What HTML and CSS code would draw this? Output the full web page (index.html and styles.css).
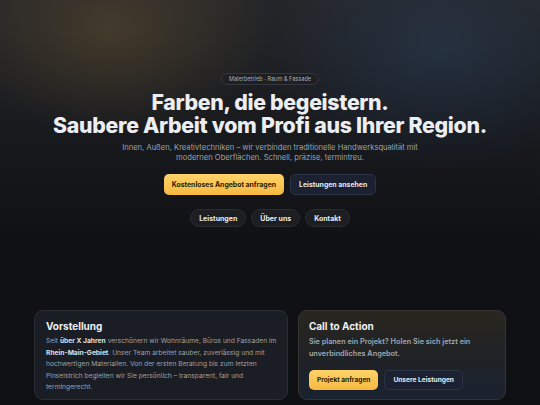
FILE: index.html
```html
<!DOCTYPE html>
<html lang="de">
<head>
<meta charset="utf-8">
<title>Malerbetrieb</title>
<link rel="stylesheet" href="styles.css">
</head>
<body>
<div class="page">
  <header class="hero">
    <span class="badge">Malerbetrieb · Raum &amp; Fassade</span>
    <h1 class="title">Farben, die begeistern.<br>Saubere Arbeit vom Profi aus Ihrer Region.</h1>
    <p class="lead">Innen, Außen, Kreativtechniken – wir verbinden traditionelle Handwerksqualität mit modernen Oberflächen. Schnell, präzise, termintreu.</p>
    <div class="actions">
      <a class="btn btn-primary" href="#">Kostenloses Angebot anfragen</a>
      <a class="btn btn-dark" href="#">Leistungen ansehen</a>
    </div>
    <nav class="nav">
      <a class="pill" href="#">Leistungen</a>
      <a class="pill" href="#">Über uns</a>
      <a class="pill" href="#">Kontakt</a>
    </nav>
  </header>
  <main class="cards">
    <section class="card card-intro">
      <h2 class="card-title">Vorstellung</h2>
      <p class="card-text">Seit <strong>über X Jahren</strong> verschönern wir Wohnräume, Büros und Fassaden im <strong>Rhein-Main-Gebiet</strong>. Unser Team arbeitet sauber, zuverlässig und mit hochwertigen Materialien. Von der ersten Beratung bis zum letzten Pinselstrich begleiten wir Sie persönlich – transparent, fair und termingerecht.</p>
    </section>
    <section class="card card-cta">
      <h2 class="card-title">Call to Action</h2>
      <p class="cta-text">Sie planen ein Projekt? Holen Sie sich jetzt ein unverbindliches Angebot.</p>
      <div class="cta-actions">
        <a class="btn btn-primary btn-sm" href="#">Projekt anfragen</a>
        <a class="btn btn-dark btn-sm" href="#">Unsere Leistungen</a>
      </div>
    </section>
  </main>
</div>
</body>
</html>
```

FILE: styles.css
```css
* { box-sizing: border-box; }
html, body { margin: 0; padding: 0; }
body {
  font-family: Inter, "Liberation Sans", sans-serif;
  color: #e9ebef;
  background: #0e1014;
  min-height: 405px;
}
.page {
  min-height: 405px;
  background:
    radial-gradient(ellipse 230px 150px at 110px 30px, rgba(120, 95, 50, 0.38), transparent 70%),
    radial-gradient(ellipse 240px 170px at 440px 50px, rgba(45, 75, 115, 0.35), transparent 70%),
    linear-gradient(180deg, #252629 0%, #17191d 35%, #0f1115 60%, #0e1014 100%);
  padding: 73px 34px 6px;
}
.hero {
  display: flex;
  flex-direction: column;
  align-items: center;
  text-align: center;
}
.badge {
  font-size: 5.6px;
  color: #a9adb5;
  border: 1px solid #34373d;
  background: rgba(30, 32, 36, 0.7);
  border-radius: 999px;
  padding: 2px 7px;
  line-height: 6px;
}
.title {
  margin: 6px 0 0;
  font-size: 21.3px;
  line-height: 23px;
  font-weight: 800;
  letter-spacing: -0.3px;
  color: #eceef2;
}
.lead {
  margin: 6px 0 0;
  max-width: 310px;
  font-size: 7.6px;
  line-height: 10px;
  color: #9ca2ad;
}
.actions {
  display: flex;
  gap: 6px;
  margin-top: 11px;
}
.btn {
  display: inline-flex;
  align-items: center;
  justify-content: center;
  height: 21px;
  padding: 0 8px;
  border-radius: 5px;
  font-size: 6.9px;
  font-weight: 700;
  text-decoration: none;
  white-space: nowrap;
}
.btn-primary {
  background: linear-gradient(180deg, #ffd36a, #f5b942);
  color: #2a1d05;
}
.btn-dark {
  background: #1b2130;
  border: 1px solid #2c3344;
  color: #e6e9ef;
}
.nav {
  display: flex;
  gap: 5px;
  margin-top: 14px;
}
.pill {
  height: 18px;
  display: inline-flex;
  align-items: center;
  padding: 0 8px;
  border-radius: 999px;
  background: #1c1e22;
  border: 1px solid #2a2c31;
  color: #e8eaee;
  font-size: 7px;
  font-weight: 700;
  text-decoration: none;
}
.cards {
  display: grid;
  grid-template-columns: 1.22fr 1fr;
  gap: 10px;
  margin-top: 83px;
}
.card {
  border-radius: 9px;
  border: 1px solid #2a2d33;
  padding: 9px 11px 10px;
  height: 90px;
}
.card-intro {
  background: #1a1d23;
  padding-right: 8px;
}
.card-cta {
  background: linear-gradient(180deg, #29261f 0%, #1f2226 55%, #1a2230 100%);
  border-color: #34332f;
  padding-left: 10px;
}
.card-title {
  margin: 0;
  font-size: 10px;
  line-height: 13px;
  font-weight: 700;
  color: #eef0f3;
}
.card-text {
  margin: 3px 0 0;
  font-size: 6.7px;
  line-height: 11.5px;
  color: #9ba1ab;
}
.card-text strong { color: #dde0e5; font-weight: 700; }
.cta-text {
  margin: 3px 0 0;
  font-size: 7.3px;
  line-height: 12px;
  font-weight: 600;
  color: #a2a7b0;
}
.cta-actions {
  display: flex;
  gap: 6px;
  margin-top: 10px;
}
.btn-sm { height: 20px; font-size: 6.6px; padding: 0 8px; }
```
